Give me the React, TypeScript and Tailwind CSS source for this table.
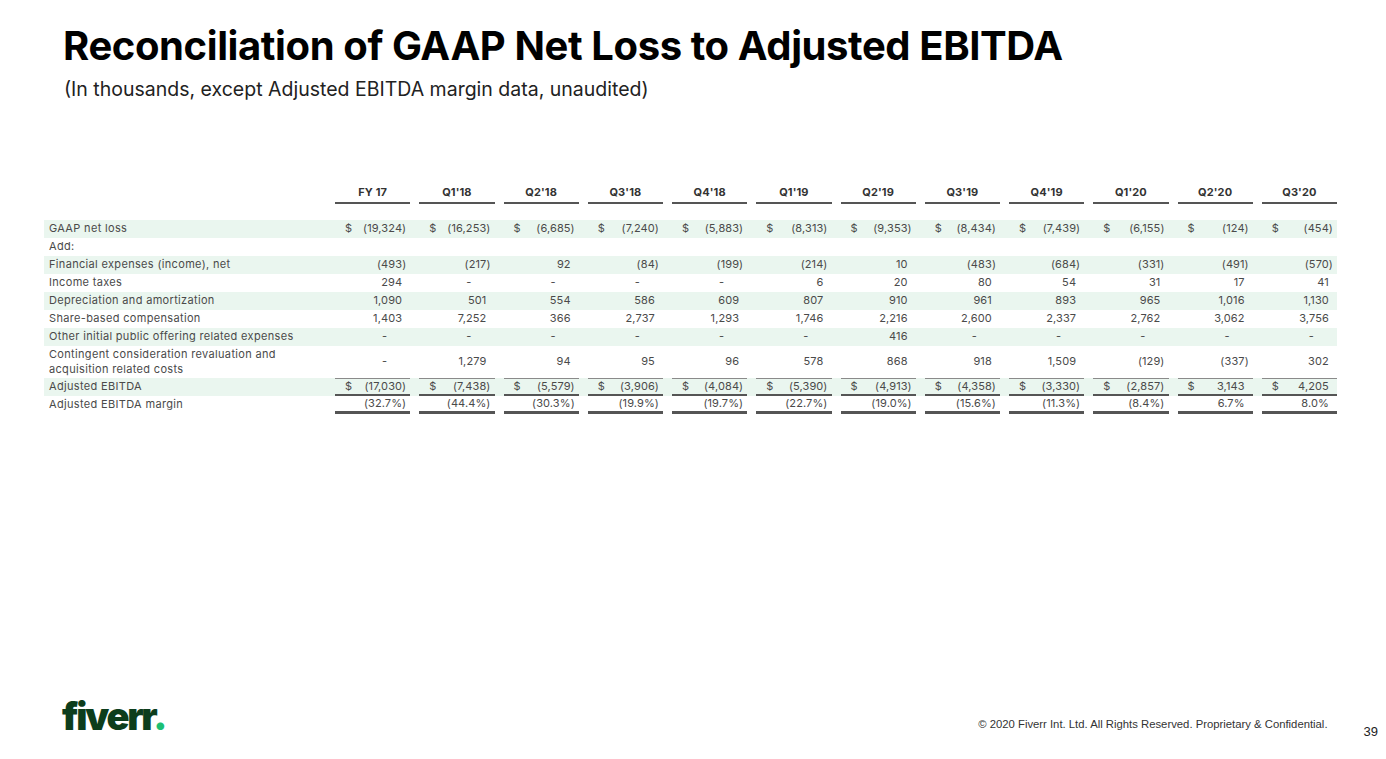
const COLS = ["FY 17", "Q1'18", "Q2'18", "Q3'18", "Q4'18", "Q1'19", "Q2'19", "Q3'19", "Q4'19", "Q1'20", "Q2'20", "Q3'20"];

type Row = {
  label: string | string[];
  values?: string[];
  dollar?: boolean;
  striped?: boolean;
  kind?: "total" | "margin";
  tall?: boolean;
};

const ROWS: Row[] = [
  {
    label: "GAAP net loss",
    dollar: true,
    striped: true,
    values: ["(19,324)", "(16,253)", "(6,685)", "(7,240)", "(5,883)", "(8,313)", "(9,353)", "(8,434)", "(7,439)", "(6,155)", "(124)", "(454)"],
  },
  { label: "Add:" },
  {
    label: "Financial expenses (income), net",
    striped: true,
    values: ["(493)", "(217)", "92", "(84)", "(199)", "(214)", "10", "(483)", "(684)", "(331)", "(491)", "(570)"],
  },
  {
    label: "Income taxes",
    values: ["294", "-", "-", "-", "-", "6", "20", "80", "54", "31", "17", "41"],
  },
  {
    label: "Depreciation and amortization",
    striped: true,
    values: ["1,090", "501", "554", "586", "609", "807", "910", "961", "893", "965", "1,016", "1,130"],
  },
  {
    label: "Share-based compensation",
    values: ["1,403", "7,252", "366", "2,737", "1,293", "1,746", "2,216", "2,600", "2,337", "2,762", "3,062", "3,756"],
  },
  {
    label: "Other initial public offering related expenses",
    striped: true,
    values: ["-", "-", "-", "-", "-", "-", "416", "-", "-", "-", "-", "-"],
  },
  {
    label: ["Contingent consideration revaluation and", "acquisition related costs"],
    tall: true,
    values: ["-", "1,279", "94", "95", "96", "578", "868", "918", "1,509", "(129)", "(337)", "302"],
  },
  {
    label: "Adjusted EBITDA",
    dollar: true,
    striped: true,
    kind: "total",
    values: ["(17,030)", "(7,438)", "(5,579)", "(3,906)", "(4,084)", "(5,390)", "(4,913)", "(4,358)", "(3,330)", "(2,857)", "3,143", "4,205"],
  },
  {
    label: "Adjusted EBITDA margin",
    kind: "margin",
    values: ["(32.7%)", "(44.4%)", "(30.3%)", "(19.9%)", "(19.7%)", "(22.7%)", "(19.0%)", "(15.6%)", "(11.3%)", "(8.4%)", "6.7%", "8.0%"],
  },
];

function Value({ v }: { v: string }) {
  if (v === "-") return <span className="pr-[19px]">-</span>;
  const neg = v.startsWith("(");
  return (
    <span>
      {v}
      {!neg && <span className="invisible">)</span>}
    </span>
  );
}

function TableRow({ row }: { row: Row }) {
  const h = row.tall ? "h-[32px]" : "h-[18px]";
  const bg = row.striped ? "bg-[#eaf6ef]" : "";
  const lines =
    row.kind === "total"
      ? "border-t border-b-2 border-t-[#8a8a8a] border-b-[#555]"
      : row.kind === "margin"
      ? "border-b-[3px] border-[#555]"
      : "";
  return (
    <div className={`grid grid-cols-[282px_repeat(12,minmax(0,1fr))] ${bg}`}>
      <div className={`${h} flex flex-col justify-center pl-[5px] leading-[15px] tracking-[0.03em]`}>
        {Array.isArray(row.label) ? row.label.map((l) => <div key={l}>{l}</div>) : row.label}
      </div>
      {row.values
        ? row.values.map((v, i) => (
            <div key={i} className={`${h} pl-[9px]`}>
              <div className={`h-full flex items-center justify-between pr-[4px] ${lines}`}>
                <span className="pl-[10px]">{row.dollar ? "$" : ""}</span>
                <Value v={v} />
              </div>
            </div>
          ))
        : null}
    </div>
  );
}

export default function App() {
  return (
    <div className="w-[1386px] h-[759px] bg-white flex flex-col overflow-hidden font-['Inter',sans-serif]">
      <h1 className="mt-[26px] pl-[63px] text-[40px] leading-none font-bold tracking-[-0.01em] text-black">
        Reconciliation of GAAP Net Loss to Adjusted EBITDA
      </h1>
      <p className="mt-[14px] pl-[64px] text-[19.5px] leading-none text-[#222]">
        (In thousands, except Adjusted EBITDA margin data, unaudited)
      </p>

      <div className="mt-[84px] ml-[44px] w-[1293px] text-[11px] text-[#4a4a4a] tracking-[0.01em]">
        <div className="grid grid-cols-[282px_repeat(12,minmax(0,1fr))] h-[20px]">
          <div />
          {COLS.map((c) => (
            <div key={c} className="pl-[9px]">
              <div className="h-full flex items-center justify-center font-bold text-[#333] border-b-2 border-[#555]">
                {c}
              </div>
            </div>
          ))}
        </div>
        <div className="h-[16px]" />
        {ROWS.map((r, i) => (
          <TableRow key={i} row={r} />
        ))}
      </div>

      <div className="mt-auto mb-[24px] flex items-end">
        <div className="pl-[62px] text-[38px] leading-none font-black tracking-[-0.06em] text-[#0d3d1c]">
          fiverr<span className="text-[#1dbf73]">.</span>
        </div>
        <div className="ml-auto mb-[2px] font-['Liberation_Sans',sans-serif] text-[11.3px] text-[#333]">
          © 2020 Fiverr Int. Ltd. All Rights Reserved. Proprietary &amp; Confidential.
        </div>
        <div className="ml-[36px] mr-[8px] -mb-[6px] font-['Liberation_Sans',sans-serif] text-[13px] text-[#222]">39</div>
      </div>
    </div>
  );
}
